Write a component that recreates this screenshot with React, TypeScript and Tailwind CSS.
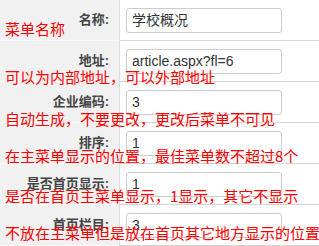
const rows = [
  { label: "名称:", value: "学校概况" },
  { label: "地址:", value: "article.aspx?fl=6" },
  { label: "企业编码:", value: "3" },
  { label: "排序:", value: "1" },
  { label: "是否首页显示:", value: "1" },
  { label: "首页栏目:", value: "3" },
];

// red notes drawn over the form
const notes = [
  { text: "菜单名称", cls: "top-[20px]" },
  { text: "可以为内部地址，可以外部地址", cls: "top-[68px]" },
  { text: "自动生成，不要更改，更改后菜单不可见", cls: "top-[110px]" },
  { text: "在主菜单显示的位置，最佳菜单数不超过8个", cls: "top-[147px]" },
  { text: "是否在首页主菜单显示，1显示，其它不显示", cls: "top-[187px]" },
  { text: "不放在主菜单但是放在首页其它地方显示的位置", cls: "top-[224px]" },
];

const App: React.FC = () => {
  const font = "font-['Liberation_Sans','Noto_Sans_CJK_SC',sans-serif]";

  return (
    <div className={`relative w-[319px] h-[246px] overflow-hidden bg-white ${font}`}>
      {rows.map((row) => (
        <div key={row.label} className="flex h-[41px]">
          <div className="w-[119px] shrink-0 bg-[#f1f1f1] border-b border-[#f9f9f9] flex items-center justify-end pr-[10px] text-[13px] font-bold text-[#444]">
            {row.label}
          </div>
          <div className="flex-1 flex items-center pl-[6px] border-l border-b border-l-[#dddddd] border-b-[#d6d6d6]">
            <div className="w-[156px] h-[25px] border border-[#cccccc] rounded-[3px] flex items-center pl-[5px] text-[14px] text-[#333]">
              {row.value}
            </div>
          </div>
        </div>
      ))}

      {notes.map((n) => (
        <div
          key={n.text}
          className={`absolute left-[5px] ${n.cls} text-[15px] leading-[17px] whitespace-nowrap text-[#ff0000] font-['Noto_Sans_CJK_SC',sans-serif]`}
        >
          {n.text}
        </div>
      ))}
    </div>
  );
};

export default App;
